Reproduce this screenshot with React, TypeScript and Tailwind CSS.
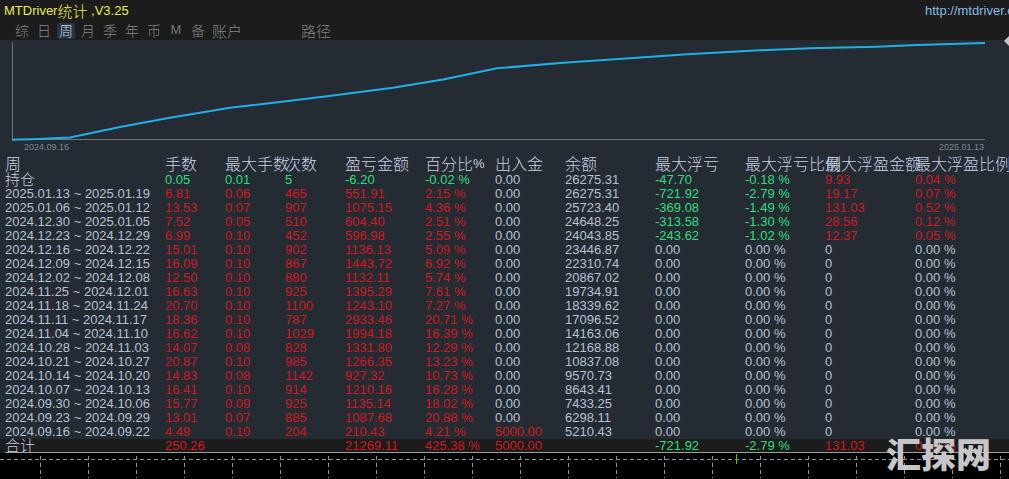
import { useState } from "react";

const tabs = ["综", "日", "周", "月", "季", "年", "币", "M", "备"];

const columns = [
  { title: "周", width: "w-[160px]" },
  { title: "手数", width: "w-[60px]" },
  { title: "最大手数", width: "w-[60px]" },
  { title: "次数", width: "w-[60px]" },
  { title: "盈亏金额", width: "w-[80px]" },
  { title: "百分比", unit: "%", width: "w-[70px]" },
  { title: "出入金", width: "w-[70px]" },
  { title: "余额", width: "w-[90px]" },
  { title: "最大浮亏", width: "w-[90px]" },
  { title: "最大浮亏比例", width: "w-[80px]" },
  { title: "最大浮盈金额", width: "w-[90px]" },
  { title: "最大浮盈比例", width: "w-auto" },
];

const rows: string[][] = [
  ["2025.01.13 ~ 2025.01.19", "6.81", "0.06", "465", "551.91", "2.15 %", "0.00", "26275.31", "-721.92", "-2.79 %", "19.17", "0.07 %"],
  ["2025.01.06 ~ 2025.01.12", "13.53", "0.07", "907", "1075.15", "4.36 %", "0.00", "25723.40", "-369.08", "-1.49 %", "131.03", "0.52 %"],
  ["2024.12.30 ~ 2025.01.05", "7.52", "0.05", "510", "604.40", "2.51 %", "0.00", "24648.25", "-313.58", "-1.30 %", "28.56", "0.12 %"],
  ["2024.12.23 ~ 2024.12.29", "6.99", "0.10", "452", "596.98", "2.55 %", "0.00", "24043.85", "-243.62", "-1.02 %", "12.37", "0.05 %"],
  ["2024.12.16 ~ 2024.12.22", "15.01", "0.10", "902", "1136.13", "5.09 %", "0.00", "23446.87", "0.00", "0.00 %", "0", "0.00 %"],
  ["2024.12.09 ~ 2024.12.15", "16.09", "0.10", "867", "1443.72", "6.92 %", "0.00", "22310.74", "0.00", "0.00 %", "0", "0.00 %"],
  ["2024.12.02 ~ 2024.12.08", "12.50", "0.10", "880", "1132.11", "5.74 %", "0.00", "20867.02", "0.00", "0.00 %", "0", "0.00 %"],
  ["2024.11.25 ~ 2024.12.01", "16.63", "0.10", "925", "1395.29", "7.61 %", "0.00", "19734.91", "0.00", "0.00 %", "0", "0.00 %"],
  ["2024.11.18 ~ 2024.11.24", "20.70", "0.10", "1100", "1243.10", "7.27 %", "0.00", "18339.62", "0.00", "0.00 %", "0", "0.00 %"],
  ["2024.11.11 ~ 2024.11.17", "18.36", "0.10", "787", "2933.46", "20.71 %", "0.00", "17096.52", "0.00", "0.00 %", "0", "0.00 %"],
  ["2024.11.04 ~ 2024.11.10", "16.62", "0.10", "1029", "1994.18", "16.39 %", "0.00", "14163.06", "0.00", "0.00 %", "0", "0.00 %"],
  ["2024.10.28 ~ 2024.11.03", "14.07", "0.08", "828", "1331.80", "12.29 %", "0.00", "12168.88", "0.00", "0.00 %", "0", "0.00 %"],
  ["2024.10.21 ~ 2024.10.27", "20.87", "0.10", "985", "1266.35", "13.23 %", "0.00", "10837.08", "0.00", "0.00 %", "0", "0.00 %"],
  ["2024.10.14 ~ 2024.10.20", "14.83", "0.08", "1142", "927.32", "10.73 %", "0.00", "9570.73", "0.00", "0.00 %", "0", "0.00 %"],
  ["2024.10.07 ~ 2024.10.13", "16.41", "0.10", "914", "1210.16", "16.28 %", "0.00", "8643.41", "0.00", "0.00 %", "0", "0.00 %"],
  ["2024.09.30 ~ 2024.10.06", "15.77", "0.09", "925", "1135.14", "18.02 %", "0.00", "7433.25", "0.00", "0.00 %", "0", "0.00 %"],
  ["2024.09.23 ~ 2024.09.29", "13.01", "0.07", "885", "1087.68", "20.88 %", "0.00", "6298.11", "0.00", "0.00 %", "0", "0.00 %"],
  ["2024.09.16 ~ 2024.09.22", "4.49", "0.10", "204", "210.43", "4.21 %", "5000.00", "5210.43", "0.00", "0.00 %", "0", "0.00 %"],
];

const holding = ["持仓", "0.05", "0.01", "5", "-6.20", "-0.02 %", "0.00", "26275.31", "-47.70", "-0.18 %", "9.93", "0.04 %"];
const total = ["合计", "250.26", "", "", "21269.11", "425.38 %", "5000.00", "", "-721.92", "-2.79 %", "131.03", "0.52 %"];

const CJK = "font-['Noto_Sans_CJK_SC',sans-serif]";
const PLAIN = "text-[#b4c2d6]";
const RED = "text-[#cf1a20]";
const GREEN = "text-[#2fdf7c]";

function tone(value: string, column: number, open: boolean) {
  if (column === 0 || column === 7) return PLAIN;
  if (open && column <= 5) return GREEN;
  const amount = parseFloat(value);
  if (amount < 0) return GREEN;
  return amount > 0 ? RED : PLAIN;
}

function Row({ cells, open = false }: { cells: string[]; open?: boolean }) {
  return (
    <tr className="h-[14px]">
      {cells.map((value, i) => (
        <td key={i} className={`p-0 align-middle ${tone(value, i, open)}`}>
          <div className={open && i === 0 ? `h-[14px] text-[15px] leading-3 font-light text-[#c6d2e4] ${CJK}` : "h-[14px] leading-[14px]"}>{value}</div>
        </td>
      ))}
    </tr>
  );
}

function TopBar() {
  const [active, setActive] = useState("周");
  return (
    <header className="h-10 bg-[#1c1c1c]">
      <div className="flex h-[22px] items-center justify-between pl-1">
        <h1 className="flex items-center leading-5 text-[#ecec4a]">
          <span>MTDriver</span>
          <span className={`text-[15px] leading-[18px] font-light ${CJK}`}>统计</span>
          <span className="whitespace-pre">{" ,V3.25"}</span>
        </h1>
        <a href="http://mtdriver.com" className="w-[84px] overflow-hidden whitespace-nowrap text-[#84bde6]">
          http://mtdriver.com
        </a>
      </div>
      <nav className={`flex h-[18px] items-start pt-px pl-[11px] text-[14px] leading-[14px] font-light text-[#858588] ${CJK}`}>
        {tabs.map((tab) => (
          <button
            key={tab}
            type="button"
            onClick={() => setActive(tab)}
            className="flex h-4 w-[22px] justify-center"
          >
            <span
              className={
                tab === active
                  ? "h-4 w-[18px] rounded-xs bg-[#28333f] text-[#c8d8ee]"
                  : tab === "M"
                    ? "font-['Liberation_Sans',sans-serif] text-[13px] font-normal text-[#77777a]"
                    : ""
              }
            >
              {tab}
            </span>
          </button>
        ))}
        <button type="button" className="ml-[3px] h-4 text-[15px]">账户</button>
        <button type="button" className="ml-[59px] h-4 text-[15px]">路径</button>
      </nav>
    </header>
  );
}

function BalanceChart() {
  return (
    <section className="relative h-[116px] text-[9px] leading-3 text-[#7d8791]">
      <svg className="block h-[101px] w-full" viewBox="0 40 1009 101" preserveAspectRatio="none" role="img" aria-label="余额">
        <path d="M12.5 42V139.500H985" fill="none" stroke="#6f747a" strokeWidth="1" vectorEffect="non-scaling-stroke" />
        <polyline
          fill="none"
          stroke="#1fb1e6"
          strokeWidth="2"
          vectorEffect="non-scaling-stroke"
          points="12,139.700 38,139 70,137.500 120,127 167,118.300 230,107.700 280,102 333,95.500 393,87.700 443,79.500 497,68.300 560,63 633,58 687,54.300 760,50.300 810,48.300 877,46.700 917,45 985,43"
        />
      </svg>
      <div className="flex justify-between pr-[25px] pl-6">
        <span>2024.09.16</span>
        <span>2025.01.13</span>
      </div>
      <svg className="absolute -top-1 right-0 h-[10px] w-[5px]" viewBox="0 0 5 10" aria-hidden="true">
        <path d="M0 5L5 0V10Z" fill="#c4c4c4" />
      </svg>
    </section>
  );
}

function StatsTable() {
  return (
    <table className="w-full table-fixed border-collapse text-left whitespace-nowrap">
      <colgroup>
        {columns.map((column, i) => (
          <col key={i} className={column.width} />
        ))}
      </colgroup>
      <thead>
        <tr className="h-[17px]">
          {columns.map((column, i) => (
            <th key={i} scope="col" className="p-0 align-top font-light text-[#c6d2e4]">
              <div className={`flex h-4 text-[16px] leading-[14px] ${CJK}`}>
                {column.title}
                {column.unit && (
                  <span className="font-['Liberation_Sans',sans-serif] text-[13px] leading-4 font-normal">{column.unit}</span>
                )}
              </div>
            </th>
          ))}
        </tr>
      </thead>
      <tbody>
        <Row cells={holding} open />
        {rows.map((cells) => (
          <Row key={cells[0]} cells={cells} />
        ))}
      </tbody>
      <tfoot>
        <tr className="h-[13px] border-b border-[#9a9ea6]">
          {total.map((value, i) => (
            <td key={i} className={`p-0 align-bottom ${tone(value, i, false)}`}>
              <div className={i === 0 ? `h-3 text-[15px] leading-[10px] font-light text-[#c6d2e4] ${CJK}` : "h-3 leading-3"}>{value}</div>
            </td>
          ))}
        </tr>
      </tfoot>
    </table>
  );
}

function IndicatorGrid() {
  return (
    <svg className="block h-[27px] w-full bg-black" aria-hidden="true">
      <defs>
        <pattern id="ticks" width="48" height="27" patternUnits="userSpaceOnUse">
          <path d="M40.5 3V25" stroke="#8f9499" strokeDasharray="4 3" />
        </pattern>
      </defs>
      <rect width="100%" height="27" fill="url(#ticks)" />
      <line x1="0" x2="100%" y1="6.500" y2="6.500" stroke="#8f9499" strokeDasharray="4 3" />
      <path d="M736.5 1V11" stroke="#2bd62b" />
    </svg>
  );
}

export default function App() {
  return (
    <main className="relative w-full overflow-hidden bg-[#252b33] font-['Liberation_Sans','Noto_Sans_CJK_SC',sans-serif] text-[13px]">
      <TopBar />
      <BalanceChart />
      <div className="bg-linear-to-t from-[#1c1c1c] from-[14px] to-transparent to-[14px] pl-[5px]">
        <StatsTable />
      </div>
      <IndicatorGrid />
      <div className={`absolute right-[18px] bottom-[7px] text-[35px] leading-10 font-black text-[#c6c6c8] ${CJK}`}>汇探网</div>
    </main>
  );
}
